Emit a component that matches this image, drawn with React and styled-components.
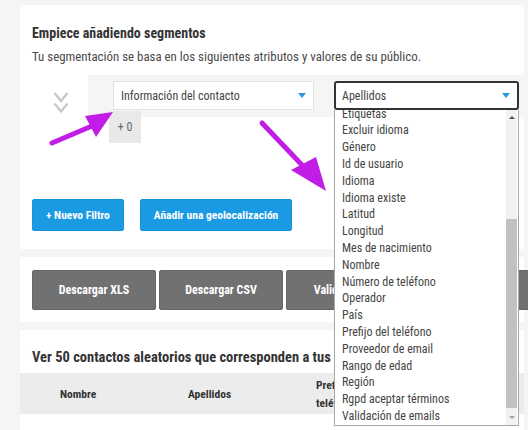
import React from "react";
import styled, { createGlobalStyle } from "styled-components";

const GlobalStyle = createGlobalStyle`
  html, body { margin: 0; padding: 0; }
  body {
    background: #f4f5f5;
    font-family: "Roboto Condensed", "Liberation Sans Narrow", "Roboto", sans-serif;
    color: #333;
    width: 528px;
    height: 430px;
    overflow: hidden;
  }
  * { box-sizing: border-box; }
`;

const Page = styled.div`
  position: relative;
  padding: 5px 0 0 20px;
  width: 528px;
  height: 430px;
  overflow: hidden;
`;

const Card = styled.section`
  width: 504px;
  background: #fff;
  padding: ${(p) => p.$pad || "18px 12px"};
  & + & { margin-top: 8px; }
`;

const Title = styled.h3`
  margin: 0;
  font-size: ${(p) => (p.$large ? "14.5px" : "14px")};
  line-height: 20px;
  font-weight: 700;
  color: #333;
  white-space: nowrap;
`;

const Subtitle = styled.p`
  margin: 5px 0 0;
  font-size: 12.9px;
  line-height: 18px;
  color: #4a4a4a;
  white-space: nowrap;
`;

const FilterRow = styled.div`
  display: flex;
  margin-top: 9px;
  margin-right: -12px;
`;

const ChevronCol = styled.div`
  width: 56px;
  flex: none;
  padding: 17px 0 0 21px;
  svg { display: block; }
`;

const FilterBlock = styled.div`
  flex: 1;
  display: flex;
  gap: 20px;
  background: #f5f5f5;
  padding: 6px 5px 7px 25px;
`;

const SelectWrap = styled.div`
  position: relative;
  width: ${(p) => p.$w}px;
  flex: none;
`;

const SelectBox = styled.div`
  height: 29px;
  display: flex;
  align-items: center;
  background: #fff;
  border: ${(p) => (p.$focused ? "2px solid #333" : "1px solid #e3e3e3")};
  border-radius: ${(p) => (p.$focused ? "3px" : "0")};
  padding: 0 7px 0 ${(p) => (p.$focused ? "6px" : "7px")};
  font-size: 12px;
  color: #444;
  justify-content: space-between;
`;

const Caret = styled.span`
  width: 0;
  height: 0;
  border-left: 4.5px solid transparent;
  border-right: 4.5px solid transparent;
  border-top: 5px solid #2f98dc;
`;

const CountBadge = styled.div`
  position: absolute;
  top: 30px;
  left: -4px;
  width: 32px;
  height: 32px;
  background: #e9e9e9;
  color: #666;
  font-size: 12px;
  display: flex;
  align-items: center;
  justify-content: center;
`;

const Dropdown = styled.div`
  position: absolute;
  top: 29px;
  left: 0;
  width: 185px;
  height: 316px;
  background: #fff;
  border: 1px solid #a8a8a8;
  border-top: none;
  overflow: hidden;
  z-index: 5;
  display: flex;
`;

const OptionList = styled.ul`
  list-style: none;
  margin: -4.4px 0 0;
  padding: 0;
  flex: 1;
`;

const Option = styled.li`
  height: 16.8px;
  line-height: 16.8px;
  padding-left: 7px;
  font-size: 12px;
  color: #444;
  white-space: nowrap;
`;

const Scrollbar = styled.div`
  width: 11px;
  margin-right: 1px;
  background: #f1f1f1;
  display: flex;
  flex-direction: column;
  flex: none;
`;

const ScrollArrow = styled.div`
  height: 15px;
  display: flex;
  align-items: center;
  justify-content: center;
  &::before {
    content: "";
    border-left: 3px solid transparent;
    border-right: 3px solid transparent;
    ${(p) => (p.$down ? "border-top: 3px solid #a3a3a3;" : "border-bottom: 3px solid #505050;")}
  }
`;

const ScrollTrack = styled.div`
  flex: 1;
  padding: 94px 0 2px;
  display: flex;
`;

const ScrollThumb = styled.div`
  flex: 1;
  background: #c1c1c1;
`;

const ButtonRow = styled.div`
  display: flex;
  gap: ${(p) => p.$gap || 16}px;
  margin-top: ${(p) => p.$mt || 0}px;
`;

const BlueButton = styled.button`
  height: 32px;
  padding: 0 13px;
  border: 1px solid #1694de;
  border-radius: 2px;
  background: #1a9ae2;
  color: #fff;
  font-family: inherit;
  font-weight: 700;
  font-size: 11.5px;
  white-space: nowrap;
`;

const GrayButton = styled.button`
  width: 124px;
  height: 40px;
  flex: none;
  border: 1px solid #666;
  border-radius: 2px;
  background: #717171;
  color: #fff;
  font-family: inherit;
  font-weight: 700;
  font-size: 12px;
  white-space: nowrap;
`;

const TableHead = styled.div`
  display: flex;
  margin: 5px -12px 0;
  height: 41px;
  background: #ececec;
`;

const HeadCell = styled.div`
  width: 128px;
  flex: none;
  padding: 0 4px 0 40px;
  display: flex;
  align-items: center;
  font-size: 11.5px;
  line-height: 18px;
  font-weight: 700;
  color: #333;
`;

const TableBody = styled.div`
  height: 40px;
`;

const Overlay = styled.svg`
  position: absolute;
  left: 0;
  top: 0;
  pointer-events: none;
  z-index: 10;
`;

const options = [
  "Etiquetas",
  "Excluir idioma",
  "Género",
  "Id de usuario",
  "Idioma",
  "Idioma existe",
  "Latitud",
  "Longitud",
  "Mes de nacimiento",
  "Nombre",
  "Número de teléfono",
  "Operador",
  "País",
  "Prefijo del teléfono",
  "Proveedor de email",
  "Rango de edad",
  "Región",
  "Rgpd aceptar términos",
  "Validación de emails",
];

const PURPLE = "#c11de6";

export default function App() {
  return (
    <Page>
      <GlobalStyle />
      <Card>
        <Title>Empiece añadiendo segmentos</Title>
        <Subtitle>
          Tu segmentación se basa en los siguientes atributos y valores de su público.
        </Subtitle>
        <FilterRow>
          <ChevronCol>
            <svg width="16" height="22" viewBox="0 0 16 22">
              <polyline points="1.5,1 8,9 14.5,1" fill="none" stroke="#c6c6c6" strokeWidth="2.2" />
              <polyline points="1.5,11.5 8,19.5 14.5,11.5" fill="none" stroke="#c6c6c6" strokeWidth="2.2" />
            </svg>
          </ChevronCol>
          <FilterBlock>
            <SelectWrap $w={201}>
              <SelectBox>
                Información del contacto
                <Caret />
              </SelectBox>
              <CountBadge>+ 0</CountBadge>
            </SelectWrap>
            <SelectWrap $w={185}>
              <SelectBox $focused>
                Apellidos
                <Caret />
              </SelectBox>
              <Dropdown>
                <OptionList>
                  {options.map((o) => (
                    <Option key={o}>{o}</Option>
                  ))}
                </OptionList>
                <Scrollbar>
                  <ScrollArrow />
                  <ScrollTrack>
                    <ScrollThumb />
                  </ScrollTrack>
                  <ScrollArrow $down />
                </Scrollbar>
              </Dropdown>
            </SelectWrap>
          </FilterBlock>
        </FilterRow>
        <ButtonRow $mt={82}>
          <BlueButton>+ Nuevo Filtro</BlueButton>
          <BlueButton>Añadir una geolocalización</BlueButton>
        </ButtonRow>
      </Card>
      <Card $pad="13px 12px 12px">
        <ButtonRow $gap={3}>
          <GrayButton>Descargar XLS</GrayButton>
          <GrayButton>Descargar CSV</GrayButton>
          <GrayButton>Validar emails</GrayButton>
          <GrayButton>Validar teléfonos</GrayButton>
        </ButtonRow>
      </Card>
      <Card $pad="18px 12px 0">
        <Title $large>Ver 50 contactos aleatorios que corresponden a tus contactos</Title>
        <TableHead>
          <HeadCell>Nombre</HeadCell>
          <HeadCell>Apellidos</HeadCell>
          <HeadCell>Prefijo del teléfono</HeadCell>
        </TableHead>
        <TableBody />
      </Card>
      <Overlay width="528" height="430" viewBox="0 0 528 430">
        <line x1="52" y1="143" x2="92" y2="126" stroke={PURPLE} strokeWidth="5" strokeLinecap="round" />
        <polygon points="113,112 85,116 96,137" fill={PURPLE} />
        <line x1="262" y1="123" x2="302" y2="165" stroke={PURPLE} strokeWidth="5" strokeLinecap="round" />
        <polygon points="326,191 291,170 316,157" fill={PURPLE} />
      </Overlay>
    </Page>
  );
}
